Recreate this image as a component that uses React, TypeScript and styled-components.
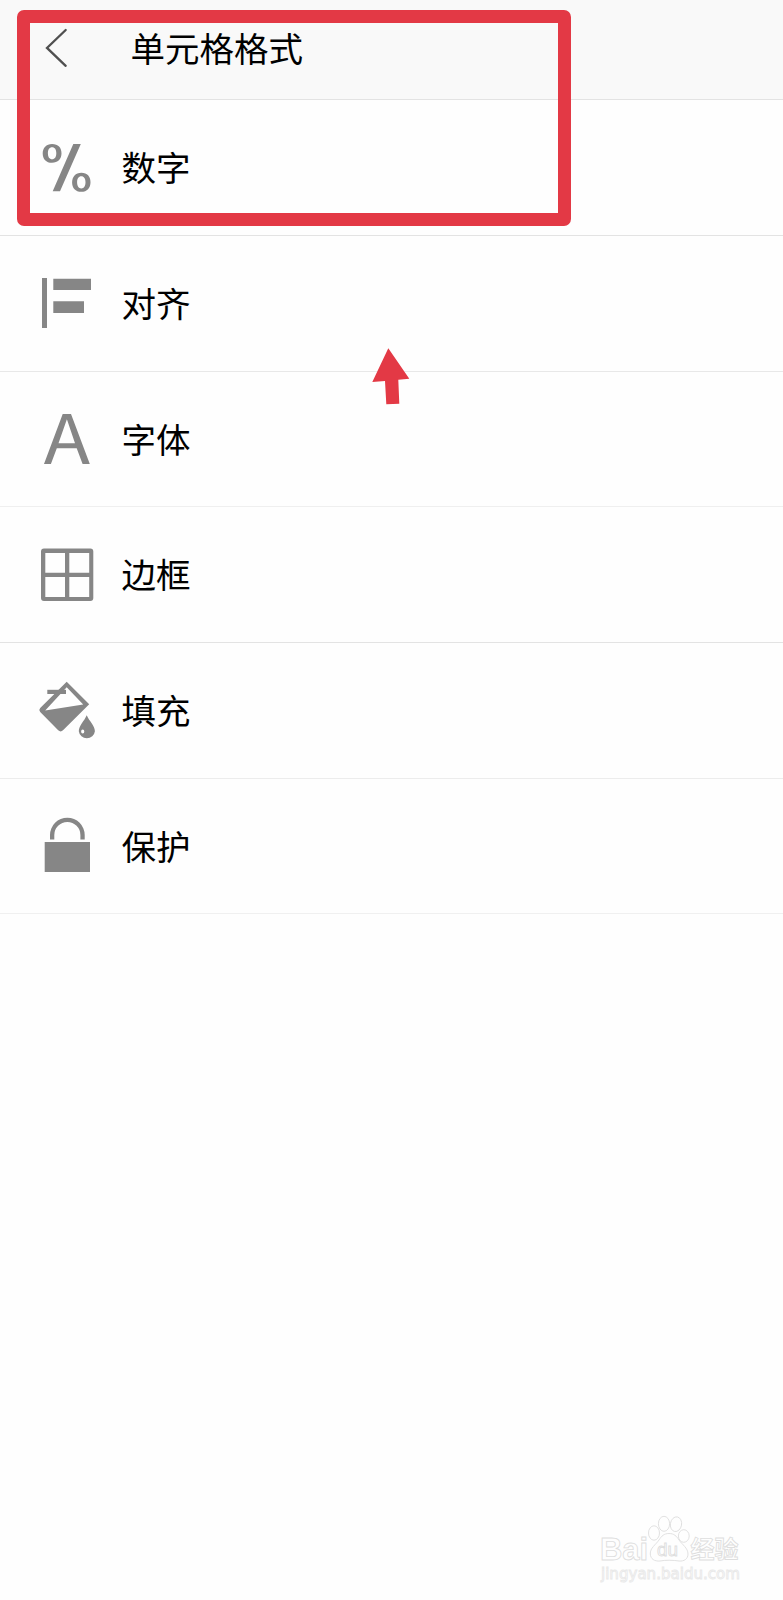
import React from 'react';
import styled, { createGlobalStyle } from 'styled-components';

const GlobalStyle = createGlobalStyle`
  * { box-sizing: border-box; }
  body {
    margin: 0;
    background: #fefefe;
    font-family: "Noto Sans CJK SC", sans-serif;
  }
`;

const Screen = styled.div`
  position: relative;
  display: flex;
  flex-direction: column;
  min-height: 1600px;
  overflow: hidden;
  background: #fefefe;
  color: #000;
`;

const Header = styled.header`
  display: flex;
  align-items: flex-start;
  height: 100px;
  padding: 24px 0 0 42px;
  background: #f9f9f9;
  border-bottom: 1px solid #e3e3e3;
`;

const BackButton = styled.button`
  width: 30px;
  height: 48px;
  padding: 0;
  border: 0;
  background: none;
`;

const Title = styled.h1`
  margin: -2px 0 0 58.5px;
  font-size: 34.5px;
  font-weight: 400;
  line-height: 50px;
`;

const List = styled.ul`
  margin: 0;
  padding: 0;
  list-style: none;
`;

const Row = styled.li<{ $height: number; $line: string }>`
  display: flex;
  align-items: flex-start;
  gap: 25.5px;
  height: ${(p) => p.$height}px;
  padding: 36px 0 0 36px;
  border-bottom: 1px solid ${(p) => p.$line};
`;

const Icon = styled.svg`
  display: block;
  flex: none;
  width: 60px;
  height: 60px;
  fill: #868686;
`;

const Label = styled.span`
  padding-top: 5px;
  font-size: 34.5px;
  line-height: 50px;
`;

const Highlight = styled.div`
  position: absolute;
  left: 17.4px;
  top: 10.4px;
  width: 553.4px;
  height: 216px;
  border: 13px solid #e33945;
  border-radius: 7px;
`;

const Pointer = styled.svg`
  position: absolute;
  left: 370px;
  top: 346px;
  fill: #e33945;
`;

const Watermark = styled.svg`
  position: absolute;
  left: 583px;
  top: 1500px;
  fill: #fefefe;
  stroke: #dedede;
  stroke-width: 0.9;
`;

const items = [
  {
    label: '数字', height: 136, line: '#e3e3e3',
    icon: (
      <path fillRule="evenodd" d="M37.3 8H44.8L24 55.3H16.7ZM16.1 7.9C22.2 7.9 25.5 11.5 25.5 17.2S21.9 26.7 16 26.7 6.7 23 6.7 17.4 10.2 7.9 16.1 7.9ZM16.1 11.3C13.4 11.3 11.9 13.6 11.9 17.3S13.4 23.3 16.1 23.3 20.3 21 20.3 17.3 18.8 11.3 16.1 11.3ZM45.4 36.8C51.2 36.8 54.5 40.5 54.5 46.2S51.1 55.8 45.3 55.8 36.1 52.2 36.1 46.5 39.5 36.8 45.4 36.8ZM45.3 40.2C42.6 40.2 41.1 42.6 41.1 46.3S42.6 52.4 45.3 52.4 49.5 50 49.5 46.3 48 40.2 45.3 40.2Z" />
    ),
  },
  {
    label: '对齐', height: 136, line: '#e8e8e8',
    icon: <path d="M6 6H11V56H6ZM17.3 6.7H55V18H17.3ZM17.3 29.2H48V41H17.3Z" />,
  },
  {
    label: '字体', height: 135, line: '#efefef',
    icon: <path fillRule="evenodd" d="M26.7 6H35L53.8 56H46.6L40.7 40.3H20.8L14.9 56H8ZM30.9 11.2L22.5 35.3H39Z" />,
  },
  {
    label: '边框', height: 136, line: '#e3e3e3',
    icon: (
      <path fillRule="evenodd" d="M8 5.5H54.3Q57.3 5.5 57.3 8.5V55Q57.3 58 54.3 58H8Q5 58 5 55V8.5Q5 5.5 8 5.5ZM9.3 10V29.7H29V10ZM33.3 10V29.7H53.2V10ZM9.3 33.9V54H29V33.9ZM33.3 33.9V54H53.2V33.9Z" />
    ),
  },
  {
    label: '填充', height: 136, line: '#ececec',
    icon: (
      <>
        <path fillRule="evenodd" d="M30.7 2.7L53.2 25.3L27 51.3Q24.7 53.6 22.2 51.3L4.2 33Q2.4 31 4.2 29ZM30.7 8.3L9.2 31.4L47.2 25.6Z" />
        <path d="M11.3 10.8H30V15H11.3Z" />
        <path fillRule="evenodd" d="M50.7 36.3C53.1 42 58.9 46.8 58.9 52.3A8.1 7.8 0 0 1 42.8 52.3C42.8 46.8 48.4 42 50.7 36.3ZM46.7 50.5A1.6 2 0 1 0 46.7 54.5A1.6 2 0 1 0 46.7 50.5Z" />
      </>
    ),
  },
  {
    label: '保护', height: 135, line: '#f0f0f0',
    icon: <path d="M8.7 26.9H54V57H8.7ZM14 24.5V20A17.35 17.3 0 0 1 48.7 20V24.5H44.4V20A13.05 13 0 0 0 18.3 20V24.5Z" />,
  },
];

export default function App() {
  return (
    <Screen>
      <GlobalStyle />
      <Header>
        <BackButton aria-label="返回">
          <svg width="30" height="48" fill="none" stroke="#505050" strokeWidth="2.3" strokeLinecap="round">
            <path d="M23.7 6L5 23.9L23.7 41.8" />
          </svg>
        </BackButton>
        <Title>单元格格式</Title>
      </Header>
      <List>
        {items.map((item) => (
          <Row key={item.label} $height={item.height} $line={item.line}>
            <Icon viewBox="0 0 60 60">{item.icon}</Icon>
            <Label>{item.label}</Label>
          </Row>
        ))}
      </List>
      <Highlight />
      <Pointer width="42" height="60">
        <path d="M18.3 2.3L39.3 32.7L28.3 33.7L29.3 57.7L16.3 58.3L15 35L2.3 36Z" />
      </Pointer>
      <Watermark width="170" height="90">
        <text x="17" y="60" fontFamily="Liberation Sans, sans-serif" fontWeight="700" fontSize="31" textLength="48">Bai</text>
        <ellipse cx="71" cy="33" rx="5.5" ry="7.2" />
        <ellipse cx="81" cy="23.8" rx="5.6" ry="7.5" />
        <ellipse cx="93" cy="24.2" rx="5.6" ry="7.4" transform="rotate(10 93 24.2)" />
        <ellipse cx="100.8" cy="36" rx="5.4" ry="6.3" />
        <path d="M86 33.5C91 33.5 93.5 36 96 40C99 44.5 105 48 105 54C105 59 101 61.5 96 61C90 60 82 60 77 61C71.5 61.5 67.5 59 67.3 54C67 48 73 44.5 76 40C78.5 36 81 33.5 86 33.5Z" />
        <text x="74" y="56" fontFamily="Liberation Sans, sans-serif" fontSize="18.5" textLength="21" lengthAdjust="spacingAndGlyphs">du</text>
        <text x="107.5" y="57.5" fontFamily="Noto Sans CJK SC, sans-serif" fontWeight="700" fontSize="24" textLength="48">经验</text>
        <text x="18" y="79" fontFamily="DejaVu Sans, sans-serif" fontSize="15" textLength="139" lengthAdjust="spacingAndGlyphs" stroke="#e9e9e9">jingyan.baidu.com</text>
      </Watermark>
    </Screen>
  );
}
